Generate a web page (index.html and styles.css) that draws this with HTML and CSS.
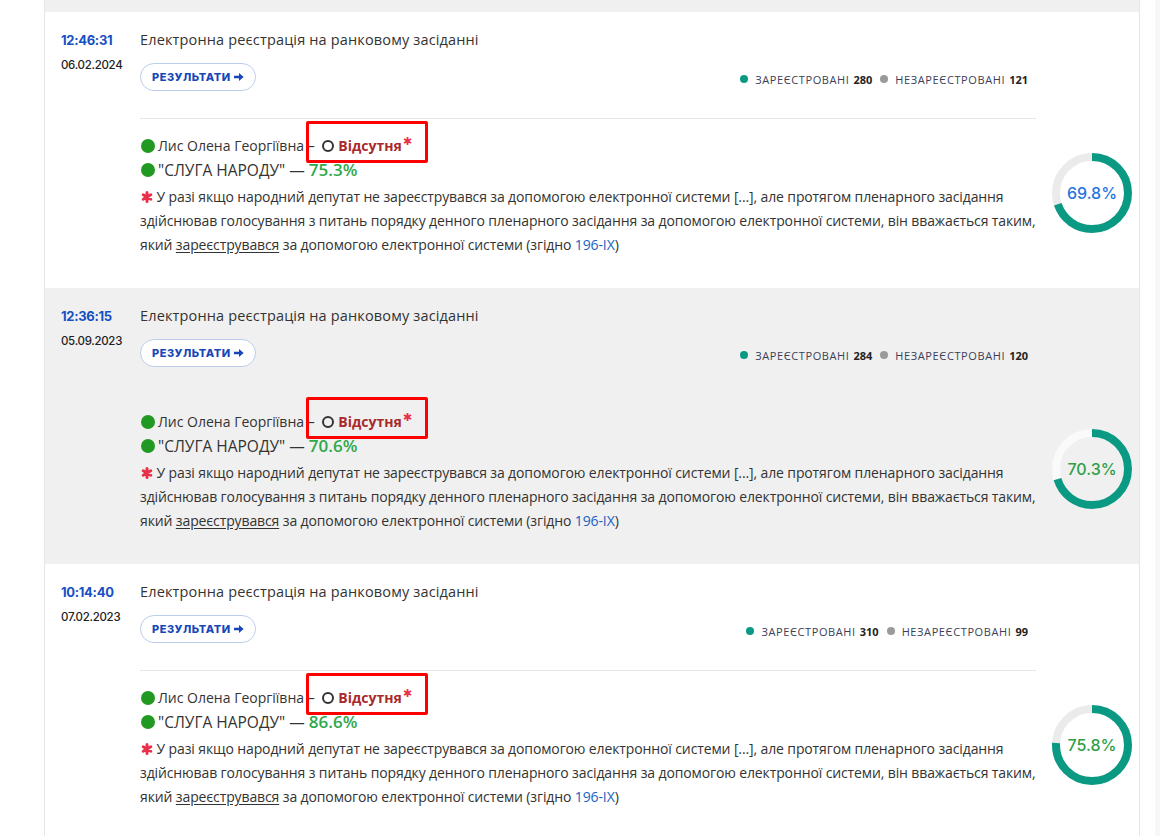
FILE: index.html
```html
<!DOCTYPE html>
<html lang="uk">
<head>
  <meta charset="UTF-8" />
  <meta name="viewport" content="width=device-width, initial-scale=1.0" />
  <title>Реєстрація депутата</title>
  <link rel="stylesheet" href="styles.css">
</head>
<body>
  <div class="page">
    <div class="list">
      <div class="list-top"></div>

      <div class="session">
        <div class="when">
          <div class="time">12:46:31</div>
          <div class="date">06.02.2024</div>
        </div>
        <div class="head">
          <div class="title">Електронна реєстрація на ранковому засіданні</div>
          <div class="head-bar">
            <a class="btn-results" href="#">Результати <svg class="arrow" width="10" height="10" viewBox="0 0 10 10"><path d="M0 3.7h5V1l4.6 4L5 9V6.3H0z" /></svg></a>
            <div class="stats">
              <span class="dot dot-yes"></span>Зареєстровані <b>280</b>
              <span class="dot dot-no"></span>Незареєстровані <b>121</b>
            </div>
          </div>
        </div>
        <div class="body">
          <div class="line"><span class="mark"></span>Лис Олена Георгіївна – <span class="absent"><span class="ring"></span>Відсутня<sup>&#10033;</sup></span></div>
          <div class="line party"><span class="mark"></span>"СЛУГА НАРОДУ" — <span class="pct">75.3%</span></div>
          <p class="note"><svg class="star" width="12" height="12" viewBox="0 0 12 12"><path d="M6 1.6v8.8M2.2 3.8l7.6 4.4M2.2 8.2l7.6-4.4" /></svg> У разі якщо народний депутат не зареєструвався за допомогою електронної системи [...], але протягом пленарного засідання здійснював голосування з питань порядку денного пленарного засідання за допомогою електронної системи, він вважається таким, який <u>зареєструвався</u> за допомогою електронної системи (згідно <a href="#">196-IX</a>)</p>
        </div>
        <div class="chart">
          <svg width="80" height="80" viewBox="0 0 80 80">
            <circle class="track" cx="40" cy="40" r="36" />
            <circle class="fill" cx="40" cy="40" r="36" stroke-dasharray="157.9 300" transform="rotate(-90 40 40)" />
            <text class="chart-text blue" x="40" y="46" text-anchor="middle">69.8%</text>
          </svg>
        </div>
      </div>

      <div class="session alt">
        <div class="when">
          <div class="time">12:36:15</div>
          <div class="date">05.09.2023</div>
        </div>
        <div class="head">
          <div class="title">Електронна реєстрація на ранковому засіданні</div>
          <div class="head-bar">
            <a class="btn-results" href="#">Результати <svg class="arrow" width="10" height="10" viewBox="0 0 10 10"><path d="M0 3.7h5V1l4.6 4L5 9V6.3H0z" /></svg></a>
            <div class="stats">
              <span class="dot dot-yes"></span>Зареєстровані <b>284</b>
              <span class="dot dot-no"></span>Незареєстровані <b>120</b>
            </div>
          </div>
        </div>
        <div class="body">
          <div class="line"><span class="mark"></span>Лис Олена Георгіївна – <span class="absent"><span class="ring"></span>Відсутня<sup>&#10033;</sup></span></div>
          <div class="line party"><span class="mark"></span>"СЛУГА НАРОДУ" — <span class="pct">70.6%</span></div>
          <p class="note"><svg class="star" width="12" height="12" viewBox="0 0 12 12"><path d="M6 1.6v8.8M2.2 3.8l7.6 4.4M2.2 8.2l7.6-4.4" /></svg> У разі якщо народний депутат не зареєструвався за допомогою електронної системи [...], але протягом пленарного засідання здійснював голосування з питань порядку денного пленарного засідання за допомогою електронної системи, він вважається таким, який <u>зареєструвався</u> за допомогою електронної системи (згідно <a href="#">196-IX</a>)</p>
        </div>
        <div class="chart">
          <svg width="80" height="80" viewBox="0 0 80 80">
            <circle class="track" cx="40" cy="40" r="36" />
            <circle class="fill" cx="40" cy="40" r="36" stroke-dasharray="159.0 300" transform="rotate(-90 40 40)" />
            <text class="chart-text green" x="40" y="46" text-anchor="middle">70.3%</text>
          </svg>
        </div>
      </div>

      <div class="session">
        <div class="when">
          <div class="time">10:14:40</div>
          <div class="date">07.02.2023</div>
        </div>
        <div class="head">
          <div class="title">Електронна реєстрація на ранковому засіданні</div>
          <div class="head-bar">
            <a class="btn-results" href="#">Результати <svg class="arrow" width="10" height="10" viewBox="0 0 10 10"><path d="M0 3.7h5V1l4.6 4L5 9V6.3H0z" /></svg></a>
            <div class="stats">
              <span class="dot dot-yes"></span>Зареєстровані <b>310</b>
              <span class="dot dot-no"></span>Незареєстровані <b>99</b>
            </div>
          </div>
        </div>
        <div class="body">
          <div class="line"><span class="mark"></span>Лис Олена Георгіївна – <span class="absent"><span class="ring"></span>Відсутня<sup>&#10033;</sup></span></div>
          <div class="line party"><span class="mark"></span>"СЛУГА НАРОДУ" — <span class="pct">86.6%</span></div>
          <p class="note"><svg class="star" width="12" height="12" viewBox="0 0 12 12"><path d="M6 1.6v8.8M2.2 3.8l7.6 4.4M2.2 8.2l7.6-4.4" /></svg> У разі якщо народний депутат не зареєструвався за допомогою електронної системи [...], але протягом пленарного засідання здійснював голосування з питань порядку денного пленарного засідання за допомогою електронної системи, він вважається таким, який <u>зареєструвався</u> за допомогою електронної системи (згідно <a href="#">196-IX</a>)</p>
        </div>
        <div class="chart">
          <svg width="80" height="80" viewBox="0 0 80 80">
            <circle class="track" cx="40" cy="40" r="36" />
            <circle class="fill" cx="40" cy="40" r="36" stroke-dasharray="171.5 300" transform="rotate(-90 40 40)" />
            <text class="chart-text green" x="40" y="46" text-anchor="middle">75.8%</text>
          </svg>
        </div>
      </div>
    </div>
    <div class="scroll-strip"></div>
  </div>
</body>
</html>
```
FILE: styles.css
```css
* {
  box-sizing: border-box;
}

body {
  margin: 0;
  background: #fff;
  color: #333;
  font-family: 'Open Sans', 'DejaVu Sans', sans-serif;
  overflow: hidden;
}

.page {
  display: flex;
  padding-left: 44px;
  min-height: 100vh;
}

.list {
  width: 1096px;
  border-left: 1px solid #e6e6e6;
  border-right: 1px solid #e6e6e6;
}

.list-top {
  height: 12px;
  background: #f0f0f0;
}

.scroll-strip {
  width: 5px;
  margin-left: 15px;
  background: #f7f7f7;
}

.session {
  display: grid;
  grid-template-columns: 79px 896px 1fr;
  grid-template-areas:
    "when head ."
    "when body chart";
  padding: 20px 0 31px 16px;
  height: 276px;
  background: #fff;
}

.session.alt {
  background: #f0f0f0;
}

.when {
  grid-area: when;
}

.time {
  font-family: 'Inter', 'Roboto', sans-serif;
  font-size: 13px;
  line-height: 16px;
  font-weight: 700;
  color: #1550c4;
  letter-spacing: -0.3px;
}

.date {
  margin-top: 9px;
  font-family: 'Inter', 'Roboto', sans-serif;
  font-size: 11.5px;
  line-height: 16px;
  font-weight: 500;
  color: #222;
  letter-spacing: -0.3px;
}

.head {
  grid-area: head;
  border-bottom: 1px solid #e6e6e6;
  padding-bottom: 27px;
}

.alt .head {
  border-bottom-color: transparent;
}

.title {
  font-size: 14.5px;
  line-height: 16px;
  letter-spacing: 0.15px;
  color: #333;
}

.head-bar {
  display: flex;
  justify-content: space-between;
  align-items: center;
  margin-top: 15px;
}

.btn-results {
  display: inline-flex;
  align-items: center;
  height: 28px;
  padding: 0 11px;
  border: 1px solid #bccdec;
  border-radius: 14px;
  background: #fff;
  color: #1646b8;
  font-family: 'Inter', 'Roboto', sans-serif;
  font-size: 11px;
  font-weight: 800;
  letter-spacing: 0.5px;
  text-transform: uppercase;
  text-decoration: none;
}

.arrow {
  margin-left: 3px;
  fill: #1646b8;
}

.stats {
  margin-right: 8px;
  padding-top: 4px;
  font-size: 11px;
  letter-spacing: 0.6px;
  color: #3b4058;
  text-transform: uppercase;
  display: flex;
  align-items: center;
}

.stats b {
  margin-left: 4px;
  margin-right: 8px;
  color: #222;
  letter-spacing: 0;
}

.stats b:last-child {
  margin-right: 0;
}

.dot {
  width: 8px;
  height: 8px;
  border-radius: 50%;
  margin-right: 7px;
}

.dot-yes {
  background: #0a9a84;
}

.dot-no {
  background: #9a9a9a;
}

.body {
  grid-area: body;
  padding-top: 15px;
}

.line {
  display: flex;
  align-items: center;
  font-size: 14px;
  line-height: 24px;
  color: #333;
  white-space: pre;
}

.mark {
  width: 14px;
  height: 14px;
  border-radius: 50%;
  background: #229922;
  margin: 0 3px 0 1px;
}

.line.party {
  font-size: 15.5px;
}

.absent {
  position: relative;
  display: inline-flex;
  align-items: center;
  color: #a82a2e;
  font-weight: 700;
  margin-left: 4px;
}

.absent::after {
  content: "";
  position: absolute;
  left: -16px;
  right: -16px;
  top: -13px;
  bottom: -5px;
  border: 3px solid #ff0000;
  border-radius: 2px;
}

.absent sup {
  color: #e8304a;
  font-family: 'DejaVu Sans', sans-serif;
  font-size: 11px;
  line-height: 0;
  margin-top: -8px;
  margin-left: 1px;
}

.ring {
  width: 12px;
  height: 12px;
  border: 2px solid #333;
  border-radius: 50%;
  margin-right: 4px;
}

.pct {
  color: #2ea84c;
  font-size: 17px;
  font-weight: 600;
}

.note {
  margin: 3px 0 0;
  font-size: 14px;
  line-height: 24px;
  letter-spacing: -0.12px;
  color: #333;
}

.star {
  margin-left: 1px;
  vertical-align: -1px;
  stroke: #e8304a;
  stroke-width: 3;
  stroke-linecap: round;
  fill: none;
}

.note u {
  text-underline-offset: 2px;
}

.note a {
  color: #1a5fc4;
  text-decoration: none;
}

.chart {
  grid-area: chart;
  align-self: center;
  margin: 10px 0 0 16px;
  height: 80px;
}

.track {
  fill: none;
  stroke: #ebebeb;
  stroke-width: 8;
}

.alt .track {
  stroke: #fafafa;
}

.fill {
  fill: none;
  stroke: #0a9a84;
  stroke-width: 8;
}

.chart-text {
  font-family: 'Inter', 'Roboto', sans-serif;
  font-size: 16px;
  font-weight: 500;
}

.chart-text.blue {
  fill: #1f74df;
}

.chart-text.green {
  fill: #2e9e48;
}
```
